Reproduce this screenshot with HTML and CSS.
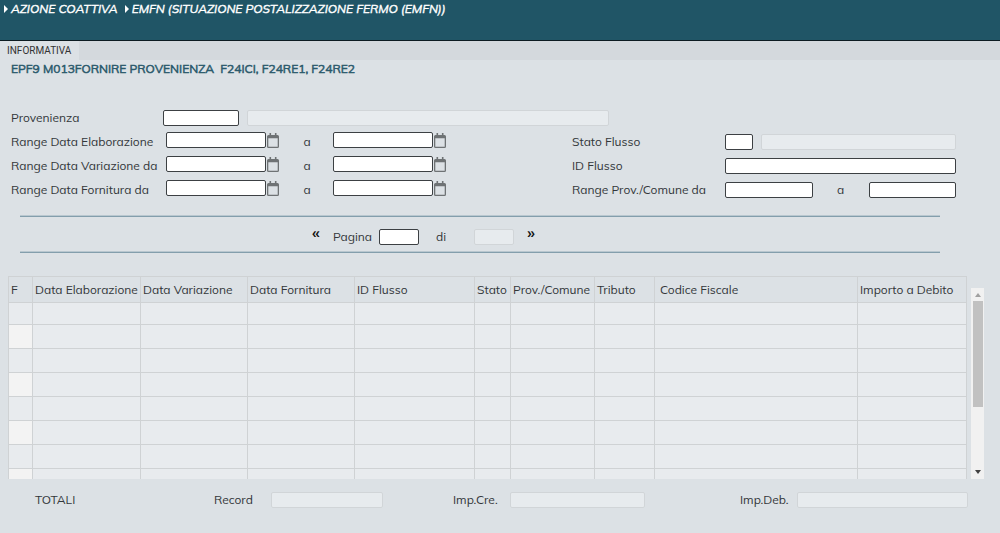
FILE: index.html
```html
<!DOCTYPE html>
<html lang="it">
<head>
<meta charset="utf-8">
<title>EMFN - Situazione postalizzazione fermo</title>
<link rel="stylesheet" href="styles.css">
</head>
<body>
<svg class="defs" aria-hidden="true">
  <symbol id="calendar" viewBox="0 0 12 15">
    <path d="M2.500 0h1.600v2h3.800V0h1.600v2h1A1.500 1.500 0 0 1 12 3.500V13.500A1.500 1.500 0 0 1 10.500 15h-9A1.500 1.500 0 0 1 0 13.500V3.500A1.500 1.500 0 0 1 1.500 2h1zM1.300 5.300v8.400h9.400V5.300z" fill="#6e7274" fill-rule="evenodd"/>
  </symbol>
  <symbol id="arrow" viewBox="0 0 4 8">
    <path d="M0 0L4 4L0 8z" fill="#fff"/>
  </symbol>
</svg>

<header class="topbar">
  <nav class="crumbs">
    <span class="crumb"><svg class="arrow"><use href="#arrow"/></svg>AZIONE COATTIVA</span>
    <span class="crumb"><svg class="arrow"><use href="#arrow"/></svg>EMFN (SITUAZIONE POSTALIZZAZIONE FERMO (EMFN))</span>
  </nav>
</header>
<div class="tabs"><button class="tab" type="button">INFORMATIVA</button></div>

<main>
  <h1 class="title">EPF9 M013FORNIRE PROVENIENZA  F24ICI, F24RE1, F24RE2</h1>

  <form class="filters">
    <div class="prov-row">
      <label for="prov">Provenienza</label>
      <input class="field" id="prov" type="text">
      <input class="field" type="text" aria-label="Descrizione provenienza" disabled>
    </div>
    <div class="columns">
      <div class="column">
        <div class="date-row">
          <label for="elab-da">Range Data Elaborazione</label>
          <input class="field" id="elab-da" type="text">
          <button class="cal" type="button" aria-label="Calendario"><svg><use href="#calendar"/></svg></button>
          <label class="to" for="elab-a">a</label>
          <input class="field" id="elab-a" type="text">
          <button class="cal" type="button" aria-label="Calendario"><svg><use href="#calendar"/></svg></button>
        </div>
        <div class="date-row">
          <label for="var-da">Range Data Variazione da</label>
          <input class="field" id="var-da" type="text">
          <button class="cal" type="button" aria-label="Calendario"><svg><use href="#calendar"/></svg></button>
          <label class="to" for="var-a">a</label>
          <input class="field" id="var-a" type="text">
          <button class="cal" type="button" aria-label="Calendario"><svg><use href="#calendar"/></svg></button>
        </div>
        <div class="date-row">
          <label for="forn-da">Range Data Fornitura da</label>
          <input class="field" id="forn-da" type="text">
          <button class="cal" type="button" aria-label="Calendario"><svg><use href="#calendar"/></svg></button>
          <label class="to" for="forn-a">a</label>
          <input class="field" id="forn-a" type="text">
          <button class="cal" type="button" aria-label="Calendario"><svg><use href="#calendar"/></svg></button>
        </div>
      </div>
      <div class="column">
        <div class="state-row">
          <label for="stato">Stato Flusso</label>
          <input class="field" id="stato" type="text">
          <input class="field" type="text" aria-label="Descrizione stato" disabled>
        </div>
        <div class="id-row">
          <label for="flusso">ID Flusso</label>
          <input class="field" id="flusso" type="text">
        </div>
        <div class="range-row">
          <label for="comune-da">Range Prov./Comune da</label>
          <input class="field" id="comune-da" type="text">
          <label class="to" for="comune-a">a</label>
          <input class="field" id="comune-a" type="text">
        </div>
      </div>
    </div>
  </form>

  <div class="pager">
    <button class="step" type="button" aria-label="Pagina precedente">«</button>
    <label for="page">Pagina</label>
    <input class="field page" id="page" type="text">
    <label class="of" for="pages">di</label>
    <input class="field page" id="pages" type="text" disabled>
    <button class="step" type="button" aria-label="Pagina successiva">»</button>
  </div>

  <section class="results">
    <div class="viewport">
      <table class="grid">
        <colgroup>
          <col class="c-flag"><col class="c-first-date"><col class="c-date"><col class="c-date"><col class="c-id"><col class="c-state"><col class="c-town"><col class="c-tax"><col class="c-code"><col class="c-amount">
        </colgroup>
        <thead>
          <tr><th>F</th><th>Data Elaborazione</th><th>Data Variazione</th><th>Data Fornitura</th><th>ID Flusso</th><th>Stato</th><th>Prov./Comune</th><th>Tributo</th><th class="code">Codice Fiscale</th><th>Importo a Debito</th></tr>
        </thead>
        <tbody>
          <tr><td></td><td></td><td></td><td></td><td></td><td></td><td></td><td></td><td></td><td></td></tr>
          <tr><td></td><td></td><td></td><td></td><td></td><td></td><td></td><td></td><td></td><td></td></tr>
          <tr><td></td><td></td><td></td><td></td><td></td><td></td><td></td><td></td><td></td><td></td></tr>
          <tr><td></td><td></td><td></td><td></td><td></td><td></td><td></td><td></td><td></td><td></td></tr>
          <tr><td></td><td></td><td></td><td></td><td></td><td></td><td></td><td></td><td></td><td></td></tr>
          <tr><td></td><td></td><td></td><td></td><td></td><td></td><td></td><td></td><td></td><td></td></tr>
          <tr><td></td><td></td><td></td><td></td><td></td><td></td><td></td><td></td><td></td><td></td></tr>
          <tr><td></td><td></td><td></td><td></td><td></td><td></td><td></td><td></td><td></td><td></td></tr>
        </tbody>
      </table>
    </div>
    <div class="scrollbar" aria-hidden="true">
      <svg class="up" viewBox="0 0 6 4"><path d="M0 4L3 0L6 4z"/></svg>
      <div class="track"><div class="thumb"></div></div>
      <svg class="down" viewBox="0 0 6 4"><path d="M0 0L3 4L6 0z"/></svg>
    </div>
  </section>

  <footer class="totals">
    <span>TOTALI</span>
    <label class="t-record" for="record">Record</label>
    <input class="field" id="record" type="text" disabled>
    <label class="t-credit" for="credit">Imp.Cre.</label>
    <input class="field" id="credit" type="text" disabled>
    <label class="t-debit" for="debit">Imp.Deb.</label>
    <input class="field" id="debit" type="text" disabled>
  </footer>
</main>
</body>
</html>
```

FILE: styles.css
```css
* { box-sizing: border-box; }

body {
  margin: 0;
  background: #dce1e5;
  color: #33373a;
  font: 12px/16px Muli, Mulish, Lato, sans-serif;
}

.defs { display: none; }

button {
  padding: 0;
  border: 0;
  background: none;
  color: inherit;
  font: inherit;
}

label { white-space: nowrap; }

/* Header */
.topbar {
  min-height: 41px;
  padding: 1px 4px;
  border-bottom: 1px solid #0d1c22;
  background: #205566;
}

.crumbs {
  display: flex;
  gap: 7px;
  color: #fff;
  font-style: italic;
  font-weight: 400;
  white-space: nowrap;
  -webkit-text-stroke: 0.4px;
}

.crumb {
  display: flex;
  align-items: center;
  gap: 3px;
}

.arrow { width: 4px; height: 8px; }

.tabs {
  display: flex;
  background: #d4d9dd;
}

.tab {
  padding: 0 8px 0 7px;
  background: #dce1e5;
  color: #333;
  font: 10px/19px Roboto, sans-serif;
}

.title {
  margin: 1px 0 0 11px;
  color: #2b5a6c;
  font-size: 12px;
  font-weight: 400;
  white-space: pre;
  -webkit-text-stroke: 0.5px;
}

/* Text boxes */
.field {
  width: 100%;
  min-width: 0;
  height: 16px;
  padding: 0 2px;
  border: 1px solid #3c4043;
  border-radius: 2px;
  background: #fff;
  font: inherit;
}

.field:disabled {
  border-color: #d1d5d8;
  background: #e7ebee;
}

/* Filters */
.filters { padding: 29px 44px 0 11px; }

.prov-row {
  display: grid;
  grid-template-columns: 144px 76px 362fr 339fr;
  column-gap: 8px;
  align-items: center;
  height: 24px;
}

.columns {
  display: grid;
  grid-template-columns: 437fr 384fr;
  column-gap: 124px;
}

.date-row,
.state-row,
.id-row,
.range-row {
  display: grid;
  align-items: center;
  height: 24px;
}

.date-row { grid-template-columns: 155px 1fr 15px 52px 1fr 15px; }
.state-row { grid-template-columns: 153px 28px 1fr; }
.id-row { grid-template-columns: 153px 1fr; }
.range-row { grid-template-columns: 153px 1fr 56px 1fr; }

.date-row .field,
.date-row .cal { margin-bottom: 4px; }

.state-row .field:disabled {
  justify-self: end;
  width: calc(100% - 8px);
}

.to { text-align: center; }

.cal { display: flex; padding-left: 1px; }
.cal svg { width: 12px; height: 15px; }

/* Pager */
.pager {
  display: flex;
  align-items: center;
  margin: 13px 60px 0 20px;
  padding: 7px 0 5px 29.2%;
  border: 2px solid #9db1bc;
  border-width: 2px 0;
  border-image: linear-gradient(#b9c7cf 0 1px, #839eac 1px 2px, transparent 2px calc(100% - 2px), #b9c7cf calc(100% - 2px) calc(100% - 1px), #839eac calc(100% - 1px)) 2 0;
}

.pager label { margin-top: 4px; }
.pager label:first-of-type { width: 46px; margin-left: 13px; }
.pager .page { width: 40px; margin-top: 3px; }
.pager .of { width: 38px; margin-left: 17px; }

.step {
  color: #111;
  font-size: 16px;
  font-weight: 700;
  line-height: 16px;
  margin-bottom: 6px;
}

.step:last-child { margin-left: 13px; }

/* Results */
.results {
  display: flex;
  gap: 4px;
  margin: 23px 16px 0 8px;
}

.viewport {
  flex: 1;
  height: 203px;
  padding-right: 1px;
  overflow: hidden;
}

.grid {
  width: 100%;
  border-collapse: collapse;
  table-layout: fixed;
}

.c-flag { width: 24px; }
.c-first-date { width: 108px; }
.c-date { width: 107px; }
.c-id { width: 120px; }
.c-state { width: 36px; }
.c-town { width: 84px; }
.c-tax { width: 60px; }
.c-code { width: 203px; }
.c-amount { width: 109px; }

.grid th,
.grid td {
  height: 24px;
  padding: 0 0 0 2px;
  border: 1px solid #cfd2d4;
}

.grid th {
  height: 26px;
  font-weight: 400;
  text-align: left;
  white-space: nowrap;
}

.grid .code { padding-left: 5px; }
.grid td { background: #e8ebee; }
.grid tbody tr:first-child td { height: 22px; }
.grid tr:nth-child(even) td:first-child { background: #f3f3f3; }

.scrollbar {
  display: flex;
  flex-direction: column;
  align-items: center;
  width: 13px;
  margin-top: 12px;
  padding: 5px 0;
  background: #f1f1f1;
}

.scrollbar svg { width: 6px; height: 4px; }
.up { fill: #a0a0a0; }
.down { fill: #404040; }

.track {
  flex: 1;
  width: 10px;
  padding: 4px 0;
}

.thumb {
  height: 64%;
  background: #c1c1c1;
}

/* Totals */
.totals {
  display: grid;
  grid-template-columns: 179fr 57px 112fr 70fr 57px 135fr 95fr 57px 171fr;
  align-items: center;
  margin: 13px 32px 0 35px;
}

.t-credit { grid-column: 5; }
.t-debit { grid-column: 8; }
```
